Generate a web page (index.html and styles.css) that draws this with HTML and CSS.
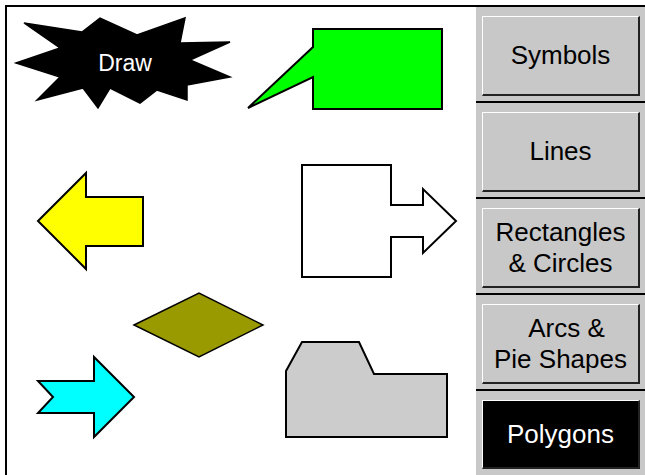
FILE: index.html
```html
<!DOCTYPE html>
<html lang="en">
<head>
  <meta charset="UTF-8" />
  <title>Polygons</title>
  <link rel="stylesheet" href="styles.css">
</head>
<body>
  <div class="app">
    <div class="canvas">
      <svg class="shapes" width="469" height="468" viewBox="7 7 469 468">
        <!-- starburst -->
        <polygon fill="#000" stroke="#000" stroke-width="1.5"
          points="16,63 60,48 24,23 82,32 100,18 137,35 185,18 180,43 230,42 190,60 230,77 187,85 187,100 157,90 140,103 110,88 98,108 83,88 37,100 60,77" />
        <text class="draw" x="125" y="71" text-anchor="middle">Draw</text>

        <!-- callout -->
        <polygon fill="#00ff00" stroke="#000" stroke-width="2"
          points="313,29 442,29 442,109 313,109 313,77 248,108 313,47" />

        <!-- left arrow -->
        <polygon fill="#ffff00" stroke="#000" stroke-width="2"
          points="38,221 86,173 86,197 143,197 143,246 86,246 86,269" />

        <!-- box with arrow -->
        <polygon fill="#fff" stroke="#000" stroke-width="2"
          points="302,165 391,165 391,205 423,205 423,189 456,221 423,253 423,237 391,237 391,277 302,277" />

        <!-- diamond -->
        <polygon fill="#999900" stroke="#000" stroke-width="1.5"
          points="134,325 199,293 263,325 199,357" />

        <!-- right arrow -->
        <polygon fill="#00ffff" stroke="#000" stroke-width="2"
          points="38,381 94,381 94,357 134,397 94,437 94,413 38,413 53,397" />

        <!-- folder -->
        <polygon fill="#cccccc" stroke="#000" stroke-width="2"
          points="286,371 302,342 359,342 374,374 447,374 447,437 286,437" />
      </svg>
    </div>

    <div class="panel">
      <div class="slot"><div class="btn"><span>Symbols</span></div></div>
      <div class="slot"><div class="btn"><span>Lines</span></div></div>
      <div class="slot"><div class="btn"><span>Rectangles<br>&amp; Circles</span></div></div>
      <div class="slot"><div class="btn"><span><span class="shift">Arcs &amp;</span><br>Pie Shapes</span></div></div>
      <div class="slot"><div class="btn active"><span>Polygons</span></div></div>
    </div>
  </div>
</body>
</html>
```

FILE: styles.css
```css
body {
  margin: 0;
  font-family: "Liberation Sans", Arial, sans-serif;
  background: #fff;
  overflow: hidden;
}
.app {
  display: flex;
  margin: 5px 0 0 5px;
  height: 468px;
  border-top: 2px solid #000;
  border-left: 2px solid #000;
}
.canvas {
  width: 469px;
  background: #fff;
}
.shapes {
  display: block;
}
.draw {
  fill: #fff;
  font-family: "Liberation Sans", Arial, sans-serif;
  font-size: 23px;
}
.panel {
  flex: 1;
  display: flex;
  flex-direction: column;
  background: #c8c8c8;
}
.slot {
  height: 96px;
  box-sizing: border-box;
  padding: 9px 5px 5px 6px;
  border-bottom: 2px solid #000;
}
.slot:last-child {
  flex: 1;
  border-bottom: none;
}
.btn {
  height: 80px;
  box-sizing: border-box;
  display: flex;
  align-items: center;
  justify-content: center;
  text-align: center;
  font-size: 26px;
  line-height: 31px;
  color: #000;
  border-top: 1px solid #fff;
  border-left: 1px solid #fff;
  border-right: 2px solid #222;
  border-bottom: 2px solid #222;
}
.btn.active {
  height: 69px;
  background: #000;
  color: #fff;
}
.shift {
  padding-left: 12px;
}
```
